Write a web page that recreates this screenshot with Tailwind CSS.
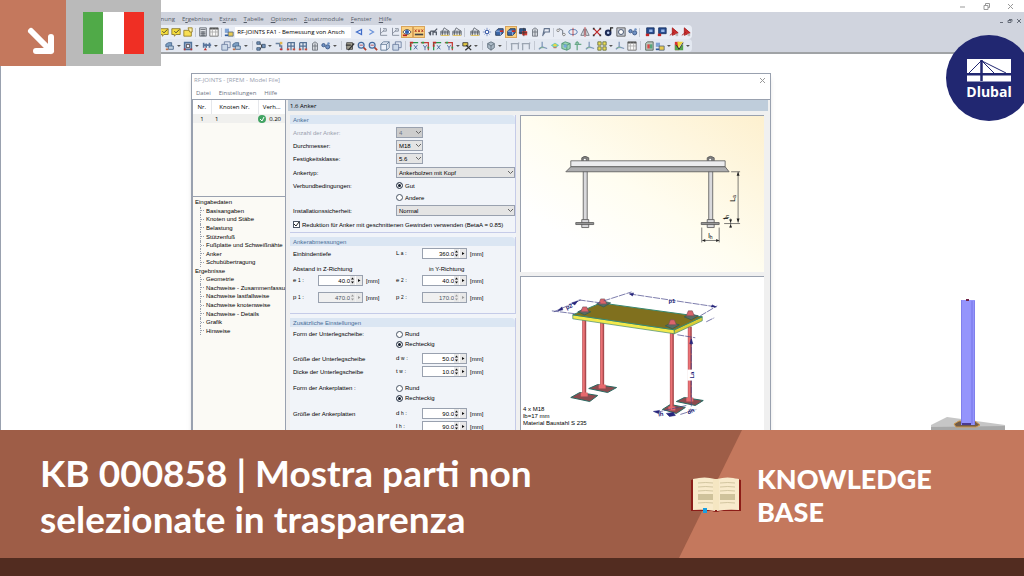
<!DOCTYPE html>
<html lang="it">
<head>
    <meta charset="UTF-8">
    <meta name="viewport" content="width=device-width, initial-scale=1.0">
    <title>KB 000858 | Mostra parti non selezionate in trasparenza</title>
    <script src="https://cdn.jsdelivr.net/npm/@tailwindcss/browser@4"></script>
</head>
<body class="h-screen flex flex-col overflow-hidden bg-white">
    <!-- toolbar icons, 12x12 grid -->
    <svg class="hidden" aria-hidden="true">
        <symbol id="i-note" viewBox="0 0 12 12"><path d="M1 2h10v7H6l-2 2V9H1z" fill="#f5dc3c" stroke="#857528"/><path d="M4 5l2 2 4-4" stroke="#333" fill="none"/></symbol>
        <symbol id="i-folder" viewBox="0 0 12 12"><path d="M1 4h9v7H1z" fill="#f8df55" stroke="#927a20"/><path d="M6 1h5v5H8z" fill="#fff3a8" stroke="#927a20"/></symbol>
        <symbol id="i-calc" viewBox="0 0 12 12"><path d="M2 1h8v10H2z" fill="#dde0e5" stroke="#60656d"/><path d="M3 3h6M3 6h6M3 8h6M3 10h6M5 5v6M7 5v6" stroke="#60656d"/></symbol>
        <symbol id="i-table" viewBox="0 0 12 12"><path d="M1 1h10v10H1z" fill="#fafafa" stroke="#666"/><path d="M1 2h10" stroke="#555" stroke-width="2"/><path d="M1 6h10M4 2v9M8 2v9" stroke="#aaa"/></symbol>
        <symbol id="i-load" viewBox="0 0 12 12"><path d="M1 2h5v5H1z" fill="#7fa3d4"/><path d="M5 6h6v5H5z" fill="#e8cb50" stroke="#55657d"/><path d="M1 10h4" stroke="#305b9d" stroke-width="2"/></symbol>
        <symbol id="i-left" viewBox="0 0 12 12"><path d="M9 3L3 6l6 3z" fill="#eaf1ff" stroke="#3f6cc8" stroke-width="1.5"/></symbol>
        <symbol id="i-right" viewBox="0 0 12 12"><path d="M4 3l5 3-5 3" fill="none" stroke="#6b93da" stroke-width="1.5"/></symbol>
        <symbol id="i-axis" viewBox="0 0 12 12"><path d="M3 1v9h8M3 8l5-5M6 2h4v3H6" fill="none" stroke="#7d8694"/></symbol>
        <symbol id="i-eye" viewBox="0 0 12 12"><path d="M1 6q5-6 10 0-5 6-10 0" fill="#fff" stroke="#444"/><circle cx="6" cy="6" r="2.5" fill="#315fae"/><path d="M1 10h5" stroke="#b71f1f" stroke-width="2"/></symbol>
        <symbol id="i-xxx" viewBox="0 0 12 12"><path d="M1 3l2 3M3 3L1 6M5 3l2 3M7 3L5 6M9 3l2 3M11 3L9 6" stroke="#b03122"/><path d="M1 9h10" stroke="#444" stroke-width="2"/></symbol>
        <symbol id="i-hand" viewBox="0 0 12 12"><path d="M1 6l2 4V5M3 5h5l3-3M6 10V6h4v4" fill="none" stroke="#515865" stroke-width="1.5"/></symbol>
        <symbol id="i-truss" viewBox="0 0 12 12"><path d="M1 10V5h10v5M1 7h10M3 5v5M6 5v5M9 5v5M3 5l2-4 6 4" fill="none" stroke="#555b65"/><path d="M1 10h10" stroke="#e2b933"/></symbol>
        <symbol id="i-node" viewBox="0 0 12 12"><path d="M6 1v10M1 6h10M3 3l6 6M9 3L3 9" stroke="#6e85bd"/><circle cx="6" cy="6" r="2" fill="#fff" stroke="#254a9f"/></symbol>
        <symbol id="i-box" viewBox="0 0 12 12"><path d="M2 5l3-3h6v5L8 10H2z" fill="#3b67a8" stroke="#243653"/><path d="M2 5h6v5" fill="none" stroke="#aac7ec"/><path d="M7 5h4" stroke="#cf2d24" stroke-width="2"/></symbol>
        <symbol id="i-redbox" viewBox="0 0 12 12"><path d="M2 2h7v6H2z" fill="#315a8e" stroke="#273a5b"/><path d="M5 5h6v5H5z" fill="#dc3e34"/><path d="M7 1v10M1 7h10" stroke="#323232"/></symbol>
        <symbol id="i-mem" viewBox="0 0 12 12"><path d="M3 11V3l3-2 3 2v8zM3 6h6M6 3v8" fill="#d5d9df" stroke="#6a707a"/></symbol>
        <symbol id="i-flag" viewBox="0 0 12 12"><path d="M2 11l2-9h6v4H4M5 6l-3 4" fill="none" stroke="#65758e" stroke-width="1.4"/></symbol>
        <symbol id="i-move" viewBox="0 0 12 12"><path d="M2 5l2-3 4 2v5h3" fill="none" stroke="#5d6571"/><circle cx="2.500" cy="4" r="1.500" fill="#fff" stroke="#777"/><circle cx="9.500" cy="9" r="1.500" fill="#fff" stroke="#777"/></symbol>
        <symbol id="i-rot" viewBox="0 0 12 12"><ellipse cx="6" cy="6" rx="5" ry="3" fill="none" stroke="#466eaa"/><path d="M6 1v10" stroke="#bf3e3e"/></symbol>
        <symbol id="i-mirror" viewBox="0 0 12 12"><path d="M5 2v8H1zM7 2v8h4z" fill="#e5e8ed" stroke="#646a73"/><path d="M6 0v12" stroke="#c44"/></symbol>
        <symbol id="i-cross" viewBox="0 0 12 12"><path d="M2 2l8 8M10 2l-8 8" stroke="#bd2424" stroke-width="1.5"/><path d="M1 1h2v2H1zM9 1h2v2H9zM1 9h2v2H1zM9 9h2v2H9z" fill="#333"/></symbol>
        <symbol id="i-ball" viewBox="0 0 12 12"><circle cx="5" cy="7" r="4" fill="#1d2b56"/><path d="M8 5V1h3" fill="none" stroke="#222" stroke-width="1.5"/><circle cx="5" cy="7" r="1.500" fill="#bdd0f4"/></symbol>
        <symbol id="i-cam" viewBox="0 0 12 12"><path d="M1 1h10v10H1z" fill="#c5cad3" stroke="#555"/><circle cx="6" cy="6" r="3" fill="#fff" stroke="#344360"/></symbol>
        <symbol id="i-dots" viewBox="0 0 12 12"><circle cx="3" cy="5" r="2" fill="#6f91c3" stroke="#34517f"/><circle cx="8" cy="7" r="2.500" fill="#6f91c3" stroke="#34517f"/><circle cx="9" cy="3" r="1.500" fill="#6f91c3"/></symbol>
        <symbol id="i-blue" viewBox="0 0 12 12"><path d="M2 1h9v7H2z" fill="#284d91" stroke="#16305f"/><path d="M5 3h4v3H5z" fill="#98b8e8"/><path d="M1 8h4v3H1z" fill="#c52525"/></symbol>
        <symbol id="i-pdf" viewBox="0 0 12 12"><path d="M4 1v9l7-3zM1 10l5-4" fill="#c62e2e" stroke="#a71919"/><path d="M8 8h3v3H8z" fill="#bbb"/></symbol>
        <symbol id="i-solid" viewBox="0 0 12 12"><path d="M1 4l3-2h4v5H1z" fill="#7d9fc3" stroke="#466589"/><path d="M4 6h6v4H4z" fill="#bfcfdf" stroke="#466589"/><path d="M1 9h3v2H1z" fill="#bf7049"/></symbol>
        <symbol id="i-frame" viewBox="0 0 12 12"><path d="M2 2h8v8H2z" fill="#eef" stroke="#50739b" stroke-width="2"/><path d="M4 4h4v4H4z" fill="none" stroke="#333"/><path d="M1 9h2v2H1zM9 9h2v2H9z" fill="#bc3333"/></symbol>
        <symbol id="i-support" viewBox="0 0 12 12"><path d="M2 2v6M5 3v5M9 2v6M1 5h10" stroke="#58749b" stroke-width="2"/><path d="M4 8l2 3H2z" fill="#bf3333"/></symbol>
        <symbol id="i-copy" viewBox="0 0 12 12"><path d="M4 1h7v7H4z" fill="#e5ebf5" stroke="#64779a"/><path d="M1 4h7v7H1z" fill="#ccd9e9" stroke="#64779a"/></symbol>
        <symbol id="i-tree" viewBox="0 0 12 12"><path d="M1 1h4v3H1zM1 8h4v3H1zM7 4h4v4H7z" fill="#7694bc" stroke="#405975"/><path d="M5 3l2 3-2 4" stroke="#333" fill="none"/></symbol>
        <symbol id="i-pin" viewBox="0 0 12 12"><path d="M2 3h5v3h2v5" fill="none" stroke="#69809f" stroke-width="2"/><path d="M7 1h3v3H7z" fill="#e1b54b"/><path d="M7 9h3v2H7z" fill="#c33"/></symbol>
        <symbol id="i-grid" viewBox="0 0 12 12"><path d="M2 2h8v9M2 2v9M2 6h8M6 2v9" fill="none" stroke="#547195" stroke-width="1.5"/><path d="M1 9h3v2H1zM8 9h3v2H8z" fill="#c54d3d"/></symbol>
        <symbol id="i-cube" viewBox="0 0 12 12"><path d="M1 4l3-3h7v7l-3 3H1zM1 4h7v7M8 4l3-3" fill="#eef3fb" stroke="#56708e"/></symbol>
        <symbol id="i-mag" viewBox="0 0 12 12"><circle cx="5" cy="5" r="3.500" fill="#dceafb" stroke="#446a9d" stroke-width="1.500"/><path d="M8 8l3 3" stroke="#b13d2d" stroke-width="2"/><path d="M3 5h4" stroke="#a33"/></symbol>
        <symbol id="i-pick" viewBox="0 0 12 12"><path d="M2 2h7v8H2z" fill="#a19e8e" stroke="#444"/><path d="M4 11L11 3M1 5h6" stroke="#333" stroke-width="1.5"/></symbol>
        <symbol id="i-dimx" viewBox="0 0 12 12"><path d="M2 11V2h9" fill="none" stroke="#289447" stroke-width="1.500"/><path d="M1 2h4M2 4v3" stroke="#c42b2b" stroke-width="2"/><path d="M6 5l4 5M10 5l-4 5" stroke="#3c5d96"/></symbol>
        <symbol id="i-dimy" viewBox="0 0 12 12"><path d="M1 2h9v9" fill="none" stroke="#c43b36" stroke-width="1.500"/><path d="M2 2h3M9 8h2" stroke="#2c9b49" stroke-width="2"/><path d="M4 5l2 3 2-3M6 8v3" stroke="#3c5d96" fill="none"/></symbol>
        <symbol id="i-select" viewBox="0 0 12 12"><path d="M1 2h6v4H1z" fill="#e4c943" stroke="#333"/><path d="M5 5l6 6M11 5L4 11" stroke="#333" stroke-width="1.500"/></symbol>
        <symbol id="i-gem" viewBox="0 0 12 12"><path d="M6 1l4 2v5l-4 3-4-3V3z" fill="#aab9c6" stroke="#5e6e7b"/><path d="M2 3l4 3 4-3M6 6v5" stroke="#5e6e7b" fill="none"/></symbol>
        <symbol id="i-beam" viewBox="0 0 12 12"><path d="M2 11V3h8v7M2 3l-1 1M10 3l1-1" fill="none" stroke="#9ba4b1" stroke-width="1.500"/></symbol>
        <symbol id="i-iso" viewBox="0 0 12 12"><path d="M5 1v6l-4 3M5 7l6 2" fill="none" stroke="#7e96b9" stroke-width="1.500"/><path d="M2 8h5" stroke="#7db38c"/></symbol>
        <symbol id="i-rain" viewBox="0 0 12 12"><path d="M1 5l5-3 5 3-5 4z" fill="#64c9c0"/><path d="M3 5l3-2 3 2-3 2z" fill="#ebd546"/><path d="M4 8h4" stroke="#db624d"/></symbol>
        <symbol id="i-mesh" viewBox="0 0 12 12"><path d="M1 3l4-2 6 2v6l-4 2-6-2z" fill="#9cd3b3" stroke="#499073"/><path d="M1 3l6 2 4-2M7 5v6" stroke="#499073" fill="none"/><circle cx="5" cy="6" r="2" fill="#78a8df"/></symbol>
        <symbol id="i-up" viewBox="0 0 12 12"><path d="M5 11V3M2 4h8M3 3l2-2 2 2" fill="none" stroke="#68a887" stroke-width="1.500"/></symbol>
        <symbol id="i-tiles" viewBox="0 0 12 12"><path d="M1 1h4v4H1zM7 1h4v4H7zM1 7h4v4H1zM7 7h4v4H7z" fill="#eede53" stroke="#626a42"/></symbol>
        <symbol id="i-sheet" viewBox="0 0 12 12"><path d="M4 1h7v10H2V3z" fill="#bac9bd" stroke="#505c55"/><path d="M4 4h3v5H4z" fill="#d44"/><path d="M7 4h3v5H7z" fill="#55a57b"/></symbol>
        <symbol id="i-color" viewBox="0 0 12 12"><path d="M1 1h5v10H1z" fill="#d83232"/><path d="M4 1h7L5 9z" fill="#eed63a"/><path d="M1 4l5 5 5-5v7H1z" fill="#54a34e"/><path d="M3 5l3 5 5-8" stroke="#222" fill="none"/></symbol>
    </svg>

    <main class="relative flex-1 min-h-0 overflow-hidden bg-white border-l border-gray-400 text-[6px] leading-[8px] text-gray-800 font-['Open_Sans',sans-serif]">
        <div class="h-3 flex justify-end items-center gap-[17px] pr-[10px]">
            <button aria-label="Riduci"><svg class="size-[7px]" viewBox="0 0 7 7"><path d="M1 4h5" stroke="#999"/></svg></button>
            <button aria-label="Ripristina"><svg class="size-[7px]" viewBox="0 0 7 7"><path d="M1 2.500h4v4H1zM2.500 2V.5h4v4H5" fill="none" stroke="#999"/></svg></button>
            <button aria-label="Chiudi"><svg class="size-[7px]" viewBox="0 0 7 7"><path d="M1 1l5 5M6 1L1 6" stroke="#999"/></svg></button>
        </div>

        <header class="bg-[#d0d4de] border-b-2 border-[#a0a3a6]">
            <nav class="h-[13px] flex items-center gap-[7px] pl-[140px] pr-[2px] text-[#555c69]">
                <a href="#">Berechnung</a>
                <a href="#">E<u>r</u>gebnisse</a>
                <a href="#">E<u>x</u>tras</a>
                <a href="#"><u>T</u>abelle</a>
                <a href="#"><u>O</u>ptionen</a>
                <a href="#"><u>Z</u>usatzmodule</a>
                <a href="#"><u>F</u>enster</a>
                <a href="#"><u>H</u>ilfe</a>
                <svg class="ml-auto mt-1 w-[23px] h-[6px]" viewBox="0 0 23 6"><path d="M1 4.500h3M10 1.500h3v2M9 2.500h3v2H9zM18 1l4 4M22 1l-4 4" fill="none" stroke="#666c78"/></svg>
            </nav>
            <div id="bar-1" class="w-[691px] h-[14px] flex items-center pl-[157px] rounded-r bg-[#e9edf5]"></div>
            <div id="bar-2" class="w-[691px] h-[13px] flex items-center pl-[163px] rounded-r bg-[#e3e8f1]"></div>
        </header>

        <!-- 3D member in the work area -->
        <svg class="absolute right-[19px] bottom-0 w-[74px] h-[132px]" viewBox="0 0 74 132">
            <path d="M0 127l16-8 58 8v5H0z" fill="#c6c6c6"/>
            <path d="M0 129v3h74v-4z" fill="#a8a8a8"/>
            <path d="M23 126l5-3h16l5 4-4 2H25z" fill="#705b4a" stroke="#d09a4c"/>
            <path d="M30 2h14v125H30z" fill="#9494fc"/>
            <path d="M30.500 2v124M43.500 3v124" stroke="#8080ec"/>
            <path d="M41 3v123" stroke="#8484f2" stroke-width="2"/>
            <path d="M35 1h3v2h-3z" fill="#702448"/>
            <path d="M31 126h9" stroke="#4b398f" stroke-width="2"/>
        </svg>

        <section aria-label="RF-JOINTS" class="absolute left-[190px] top-[73px] w-[580px] h-[460px] flex flex-col bg-[#f0f0f0] border border-gray-400 shadow-md">
            <div class="h-3 flex items-center justify-between pl-[2px] pr-1 bg-white text-gray-400">
                <h1>RF-JOINTS - [RFEM - Model File]</h1>
                <button aria-label="Schließen"><svg class="size-[7px]" viewBox="0 0 7 7"><path d="M1 1l5 5M6 1L1 6" stroke="#999"/></svg></button>
            </div>
            <nav class="h-[13px] flex items-center gap-2 px-1 bg-white text-gray-500">
                <a href="#">Datei</a>
                <a href="#">Einstellungen</a>
                <a href="#">Hilfe</a>
            </nav>
            <div class="flex-1 min-h-0 flex gap-[2px] border-t border-gray-400">
                <aside class="w-[94px] flex flex-col border-x border-gray-400 bg-[#fbfaf5] text-black">
                    <div class="h-[97px] border-b border-gray-400">
                        <table class="w-full table-fixed">
                            <thead>
                                <tr class="h-[14px] bg-white">
                                    <th class="w-[18px] font-normal">Nr.</th>
                                    <th class="font-normal border-x border-gray-200">Knoten Nr.</th>
                                    <th class="w-[27px] font-normal">Verh...</th>
                                </tr>
                            </thead>
                            <tbody>
                                <tr class="h-[9px] bg-[#f0f0ee]">
                                    <td class="text-center">1</td>
                                    <td class="pl-1">1</td>
                                    <td>
                                        <div class="flex items-center justify-between pr-1">
                                            <svg class="size-2" viewBox="0 0 8 8"><circle cx="4" cy="4" r="4" fill="#43a464"/><path d="M2 4l2 2 2-4" fill="none" stroke="#fff"/></svg>
                                            0.20
                                        </div>
                                    </td>
                                </tr>
                            </tbody>
                        </table>
                    </div>
                    <ul id="tree" class="h-[137px] mt-px grid auto-rows-fr pl-[2px] whitespace-nowrap overflow-hidden font-['Liberation_Sans',sans-serif]"></ul>
                </aside>

                <div class="flex-1 min-w-0 flex flex-col">
                    <h2 class="h-[11px] shrink-0 flex items-center px-[2px] mr-[2px] bg-[#bfcddb] text-black">1.6 Anker</h2>
                    <div class="flex-1 min-h-0 flex gap-1 pt-1 pl-[2px] pr-[6px]">
                        <form class="w-[226px] shrink-0 flex flex-col gap-1 bg-[#f1f4f9] text-black font-['Liberation_Sans',sans-serif] whitespace-nowrap">
                            <fieldset class="border-r border-b border-[#c5cbe8] pb-px">
                                <h3 class="h-[9px] mb-[2px] px-[3px] flex items-center rounded-tr bg-[#dbe6f3] text-[#466d98]">Anker</h3>
                                <div class="h-[13px] flex items-center px-[3px] text-gray-400"><label for="anzahl" class="w-[103px]">Anzahl der Anker:</label><span data-select="anzahl" data-value="4" data-off></span></div>
                                <div class="h-[13px] flex items-center px-[3px]"><label for="durchm" class="w-[103px]">Durchmesser:</label><span data-select="durchm" data-value="M18"></span></div>
                                <div class="h-[13px] flex items-center px-[3px]"><label for="fest" class="w-[103px]">Festigkeitsklasse:</label><span data-select="fest" data-value="5.6"></span></div>
                                <div class="h-[13px] mt-px flex items-center pl-[3px]"><label for="typ" class="w-[103px]">Ankertyp:</label><span data-select="typ" data-value="Ankerbolzen mit Kopf" data-wide></span></div>
                                <div class="h-[13px] flex items-center px-[3px]"><span class="w-[103px]">Verbundbedingungen:</span><label data-radio="verbund" data-on>Gut</label></div>
                                <div class="h-[11px] flex items-center pl-[106px]"><label data-radio="verbund">Andere</label></div>
                                <div class="h-[13px] mt-px flex items-center pl-[3px]"><label for="inst" class="w-[103px]">Installationssicherheit:</label><span data-select="inst" data-value="Normal" data-wide></span></div>
                                <label class="h-[13px] mt-px flex items-center gap-[2px] px-[3px]">
                                    <span class="relative size-[7px]">
                                        <input type="checkbox" checked class="peer block size-[7px] appearance-none border border-gray-600 bg-white">
                                        <svg class="absolute inset-0 hidden peer-checked:block" viewBox="0 0 7 7"><path d="M1 3l2 2 3-4" fill="none" stroke="#222"/></svg>
                                    </span>
                                    Reduktion für Anker mit geschnittenen Gewinden verwenden (BetaA = 0.85)
                                </label>
                            </fieldset>
                            <fieldset class="border-r border-b border-[#c5cbe8] pb-[9px]">
                                <h3 class="h-[9px] mb-px px-[3px] flex items-center rounded-tr bg-[#dbe6f3] text-[#466d98]">Ankerabmessungen</h3>
                                <div class="h-[13px] flex items-center px-[3px]"><span class="w-[103px]">Einbindentiefe</span><span class="w-[26px]">L <small>a</small> :</span><span data-spin="360.0"></span></div>
                                <div class="h-[11px] mt-[3px] flex items-center px-[3px]"><span class="w-[136px]">Abstand in Z-Richtung</span><span>in Y-Richtung</span></div>
                                <div class="h-[13px] flex items-center px-[3px]"><span class="w-[25px]">e <small>1</small> :</span><span class="w-[78px] flex" data-spin="40.0"></span><span class="w-[26px]">e <small>2</small> :</span><span data-spin="40.0"></span></div>
                                <div class="h-[13px] mt-1 flex items-center px-[3px]"><span class="w-[25px]">p <small>1</small> :</span><span class="w-[78px] flex" data-spin="470.0" data-off></span><span class="w-[26px]">p <small>2</small> :</span><span data-spin="170.0" data-off></span></div>
                            </fieldset>
                            <fieldset class="border-r border-b border-[#c5cbe8] pb-1">
                                <h3 class="h-[9px] mb-[2px] px-[3px] flex items-center rounded-tr bg-[#dbe6f3] text-[#466d98]">Zusätzliche Einstellungen</h3>
                                <div class="h-[10px] flex items-center px-[3px]"><span class="w-[103px]">Form der Unterlegscheibe:</span><label data-radio="scheibe">Rund</label></div>
                                <div class="h-[10px] flex items-center pl-[106px]"><label data-radio="scheibe" data-on>Rechteckig</label></div>
                                <div class="h-[13px] mt-[3px] flex items-center px-[3px]"><span class="w-[103px]">Größe der Unterlegscheibe</span><span class="w-[26px]">d <small>w</small> :</span><span data-spin="50.0"></span></div>
                                <div class="h-[13px] flex items-center px-[3px]"><span class="w-[103px]">Dicke der Unterlegscheibe</span><span class="w-[26px]">t <small>w</small> :</span><span data-spin="10.0"></span></div>
                                <div class="h-[10px] mt-[5px] flex items-center px-[3px]"><span class="w-[103px]">Form der Ankerplatten :</span><label data-radio="platte">Rund</label></div>
                                <div class="h-[10px] flex items-center pl-[106px]"><label data-radio="platte" data-on>Rechteckig</label></div>
                                <div class="h-[13px] mt-1 flex items-center px-[3px]"><span class="w-[103px]">Größe der Ankerplatten</span><span class="w-[26px]">d <small>h</small> :</span><span data-spin="90.0"></span></div>
                                <div class="h-[13px] flex items-center px-[3px]"><span class="w-[103px]"></span><span class="w-[26px]">l <small>h</small> :</span><span data-spin="90.0"></span></div>
                            </fieldset>
                        </form>

                        <div class="flex-1 min-w-0 flex flex-col gap-1">
                            <!-- section view -->
                            <div class="border-t border-l border-gray-400 bg-linear-to-tr from-white from-20% via-[#fffdf0] to-[#fdf0cf]">
                                <svg class="block w-full" viewBox="520 116 244 157" font-family="Liberation Sans" font-size="7">
                                    <g fill="#d9d9dc" stroke="#555" stroke-width=".8">
                                        <path d="M582.500 171h4v50h-4zM708.500 171h4v50h-4z"/>
                                        <path d="M581 158q3-3 7 0v4h-7zM707 158q3-3 7 0v4h-7z" fill="#888"/>
                                        <path d="M582.500 158.500h3v3h-3zM708.500 158.500h3v3h-3z" fill="#fff"/>
                                        <path d="M570 161h155v6H570z" fill="#ececee"/>
                                        <path d="M570 167h155l4 5H565z" fill="#aeaeb0"/>
                                        <path d="M581 220h7v8h-7zM707 220h7v8h-7z"/>
                                        <path d="M575 223h18v2h-18zM701 223h18v2h-18z" fill="#999"/>
                                    </g>
                                    <path d="M731 172h9M738 172v51M724 224h16M701.500 228v15M719 228v15M702 241h17M730.500 219v9" fill="none" stroke="#444" stroke-width=".7"/>
                                    <path d="M736.500 176l1.500-4 1.500 4zM736.500 219l1.500 4 1.500-4zM705 239.500l-3 1.500 3 1.500zM716 239.500l3 1.500-3 1.500zM729 220l1.500 3 1.500-3zM729 228l1.500-3 1.500 3z" fill="#222"/>
                                    <text x="708" y="239">l<tspan font-size="5" dy="1">h</tspan></text>
                                    <text transform="translate(735 202) rotate(-90)">L<tspan font-size="5" dy="1">a</tspan></text>
                                    <text transform="translate(728 220) rotate(-90)">t<tspan font-size="5" dy="1">h</tspan></text>
                                </svg>
                            </div>
                            <!-- 3D view -->
                            <div class="relative flex-1 border-t border-l border-gray-400 bg-white">
                                <svg class="block w-full" viewBox="520 278 244 152" font-family="Liberation Sans" font-size="6" font-weight="bold">
                                    <g fill="#8d4a4e" stroke="#286a62">
                                        <path d="M588 390l9-4 19 3-9 5zM570 399l9-5 18 3-8 6zM662 411l8-5 15 3-9 6zM676 403l8-4 19 3-8 5z"/>
                                    </g>
                                    <path d="M601.500 322v66M583.500 320v76M671.500 334v75M689.500 328v72" stroke="#a84a4e" stroke-width="4"/>
                                    <path d="M601 322v66M583 320v76M671 334v75M689 328v72" stroke="#ec7376" stroke-width="2"/>
                                    <path d="M580 394h7v4h-7zM598 386h7v4h-7zM668 408h7v4h-7zM686 399h7v4h-7z" fill="#e7686d"/>
                                    <path d="M572 316l102 15v4l-102-15z" fill="#f3e94c" stroke="#43896a" stroke-width=".7"/>
                                    <path d="M674 331l28-13v4l-28 13z" fill="#dace35" stroke="#43896a" stroke-width=".7"/>
                                    <path d="M572 316l28-12 102 14-28 13z" fill="#80701e" stroke="#378770"/>
                                    <g fill="#596d64" stroke="#275b5a" stroke-width=".7">
                                        <path d="M577 313l6-3 7 3-6 3zM596 305l6-3 8 2-7 4zM665 327l6-3 8 2-7 4zM684 318l6-3 8 2-7 4z"/>
                                    </g>
                                    <path d="M582 308h4l2 5h-8zM600 300h4l2 5h-8zM670 321h4l2 5h-8zM688 312h4l2 5h-8z" fill="#db646b" stroke="#715057" stroke-width=".6"/>
                                    <path d="M629 295l87 13M553 313l27-12M551 312l24 3M578 301l22 3M603 302l28-9M700 317l17-10M706 323l8-4M677 336l18 3M691 340v68M656 414l30-7M680 416l16-5" fill="none" stroke="#444487" stroke-width=".7" stroke-dasharray="7 1"/>
                                    <path d="M629 295l4-1-1 3zM716 308l-5 0 1-2zM577 302l-3 4-3-2zM557 312l4-4 1 3zM689.500 345l1.500-5 1.500 5zM653 413l6-1-1 3zM666 415l7-1 2 3-6 1z" fill="#26257c" stroke="#26257c" stroke-width=".6"/>
                                    <path d="M687 371h8v11h-8z" fill="#fff"/>
                                    <g fill="#242476">
                                        <text x="668" y="304">p1</text>
                                        <text transform="translate(566 311) rotate(-25)">p2</text>
                                        <text transform="translate(694 380) rotate(-90)">La</text>
                                        <text transform="translate(658 418) rotate(-8)">lh</text>
                                        <text transform="translate(688 416) rotate(-25)">dh</text>
                                    </g>
                                </svg>
                                <p class="absolute left-[2px] top-[129px] leading-[7px] font-['Liberation_Sans',sans-serif] text-black">4 x M18<br>lb=17 mm<br>Material Baustahl S 235</p>
                            </div>
                        </div>
                    </div>
                </div>
            </div>
        </section>
    </main>

    <!-- corner badges -->
    <div class="absolute left-0 top-0 flex">
        <div class="size-[66px] bg-[#c4785d]">
            <svg viewBox="0 0 66 66"><path d="M31 31l20 20M51 37v14H36" fill="none" stroke="#fff" stroke-width="6" stroke-linecap="round" stroke-linejoin="round"/></svg>
        </div>
        <div class="w-[95px] h-[66px] pl-[17px] pt-3 bg-[#bababa]">
            <div class="w-[61px] h-[42px] grid grid-cols-3">
                <span class="bg-[#50aa48]"></span>
                <span class="bg-white"></span>
                <span class="bg-[#ef2f24]"></span>
            </div>
        </div>
    </div>
    <div class="absolute -right-2 top-[35px] size-[86px] rounded-full flex flex-col items-center pt-6 bg-[#212771] text-white">
        <svg class="w-[44px] h-[23px]" viewBox="0 0 44 23">
            <path d="M0 0h44v14H0zM0 16.500h44v6H0z" fill="#fff"/>
            <path d="M14.500 1v21" stroke="#212771" stroke-width="2.500"/>
            <path d="M14 2L2 14M15 2l12 12M15 2l24 12" stroke="#212771"/>
        </svg>
        <span class="text-[14px] leading-[20px] font-bold font-['Open_Sans',sans-serif]">Dlubal</span>
    </div>

    <footer class="relative shrink-0 h-[146px] flex items-start border-b-[18px] border-[#522c20] bg-[#9e5d47] text-white font-['Lato',sans-serif]">
        <div class="absolute right-0 inset-y-0 w-[345px] bg-[#c4785d] [clip-path:polygon(63px_0,100%_0,100%_100%,0_100%)]"></div>
        <h1 class="flex-1 pl-10 pt-5 text-[37px] leading-[46px] font-bold">KB 000858 | Mostra parti non<br>selezionate in trasparenza</h1>
        <div class="relative w-[333px] flex items-start gap-4 pt-8">
            <svg class="mt-[15px] w-[50px] h-[36px]" viewBox="0 0 50 36">
                <path d="M0 3q12-4 25 0 13-4 25 0v31H29q-4 2-8 0H0z" fill="#8c1d18"/>
                <path d="M2 2q12-3 22 0v32q-10-2-22-1zM48 2q-12-3-22 0v32q10-2 22-1z" fill="#f8eacb"/>
                <path d="M22 2h6v31h-6z" fill="#f5e6c2"/>
                <path d="M7 6q8-1 15 0M7 10q8-1 15 0M7 14q8-1 15 0M7 26q8-1 15 0M29 6q8-1 15 0M29 10q8-1 15 0M29 14q8-1 15 0M29 26q8-1 15 0" fill="none" stroke="#d3c6a0"/>
                <path d="M7 17h15v6H7zM29 17h15v6H29z" fill="#cfc29b"/>
                <path d="M12 31h4v5h-4z" fill="#1a9ee0"/>
            </svg>
            <h2 class="text-[27px] leading-[33px] font-black">KNOWLEDGE<br>BASE</h2>
        </div>
    </footer>

    <script>
        // '|' and ',' wide and narrow separator, '_' gap, 'v' drop-down arrow, '*' pressed button, '#' load case box
        const bar1 = 'note note folder , calc table , load # left right axis axis *eye *xxx _ hand truss truss , _ truss node box *box redbox mem flag , move rot mirror cross ball cam dots , _ blue blue pdf pdf';
        const bar2 = 'solid v frame v support v copy solid v | tree v pin grid grid mem dots v | pick mag mag cube copy | dimx dimy dimx dimy v select v | gem v | beam beam | iso rain mesh up iso tiles v iso table | sheet load v color v';

        function toolbar(id, names) {
            document.getElementById(id).innerHTML = names.split(' ').map(n => {
                if (n === '|') return '<span class="mx-[2px] w-px h-[9px] bg-[#c3c8d2]"></span>';
                if (n === ',') return '<span class="mx-px w-px h-[9px] bg-[#c3c8d2]"></span>';
                if (n === '_') return '<span class="w-[3px]"></span>';
                if (n === 'v') return '<svg class="w-[7px] h-1" viewBox="0 0 7 4"><path d="M1 1h4L3 3z" fill="#555"/></svg>';
                if (n === '#') return '<select aria-label="Lastfall" class="w-[117px] h-[11px] mr-[2px] pl-[2px] appearance-none bg-white text-black"><option>RF-JOINTS FA1 - Bemessung von Ansch</option></select>';
                const on = n[0] === '*';
                const name = on ? n.slice(1) : n;
                return `<button aria-label="${name}" class="${on ? 'w-3 h-3 grid place-items-center bg-[#fbd182] border border-[#d9a45b]' : 'w-3 h-3 grid place-items-center'}"><svg class="size-[10px]"><use href="#i-${name}"/></svg></button>`;
            }).join('');
        }
        toolbar('bar-1', bar1);
        toolbar('bar-2', bar2);

        const tree = [
            { name: 'Eingabedaten', items: ['Basisangaben', 'Knoten und Stäbe', 'Belastung', 'Stützenfuß', 'Fußplatte und Schweißnähte', 'Anker', 'Schubübertragung'] },
            { name: 'Ergebnisse', items: ['Geometrie', 'Nachweise - Zusammenfassung', 'Nachweise lastfallweise', 'Nachweise knotenweise', 'Nachweise - Details', 'Grafik', 'Hinweise'] },
        ];
        document.getElementById('tree').innerHTML = tree.map(g =>
            `<li class="flex items-center">${g.name}</li>` + g.items.map(i =>
                `<li class="ml-[5px] flex items-center gap-[2px] border-l border-dotted border-gray-400"><span class="w-[3px] border-t border-dotted border-gray-400"></span>${i}</li>`
            ).join('')
        ).join('');

        document.querySelectorAll('[data-select]').forEach(el => {
            const off = 'off' in el.dataset;
            el.className = 'wide' in el.dataset ? 'relative w-[119px] h-[11px]' : 'relative w-[27px] h-[11px]';
            el.innerHTML = `<select id="${el.dataset.select}" ${off ? 'disabled' : ''} class="block w-full h-full pl-[2px] appearance-none border border-gray-400 bg-[#e4e4e4] disabled:bg-[#cdcdcd] disabled:text-gray-500"><option>${el.dataset.value}</option></select>
                <svg class="absolute right-[2px] top-1 w-[5px] h-[3px] pointer-events-none" viewBox="0 0 5 3"><path d="M0 0l2.500 2.500L5 0" fill="none" stroke="#666"/></svg>`;
        });

        document.querySelectorAll('[data-radio]').forEach(el => {
            el.className = 'flex items-center gap-[2px]';
            el.innerHTML = `<input type="radio" name="${el.dataset.radio}" ${'on' in el.dataset ? 'checked' : ''} class="size-[7px] appearance-none rounded-full border border-gray-600 bg-white checked:bg-gray-900 checked:shadow-[inset_0_0_0_1px_white]">${el.textContent}`;
        });

        document.querySelectorAll('[data-spin]').forEach(el => {
            const off = 'off' in el.dataset;
            el.classList.add('flex', 'items-center', 'gap-[3px]');
            el.innerHTML = `<span class="${off ? 'w-[45px] h-[11px] flex items-center border border-gray-400 bg-[#f0f0f0] text-gray-600' : 'w-[45px] h-[11px] flex items-center border border-gray-400 bg-white'}">
                <input aria-label="Wert" value="${el.dataset.spin}" ${off ? 'disabled' : ''} class="w-[31px] text-right">
                <svg class="w-3 h-[9px]" viewBox="0 0 12 9"><path d="M0 0h5v9H0zM6 0h6v9H6z" fill="#e8e8e8"/><path d="M1 3.500L2.500 1.500 4 3.500zM1 5.500l1.500 2 1.500-2zM8 3l2.500 1.500L8 6z" fill="${off ? '#999' : '#111'}"/></svg>
                </span>[mm]`;
        });
    </script>
</body>
</html>
